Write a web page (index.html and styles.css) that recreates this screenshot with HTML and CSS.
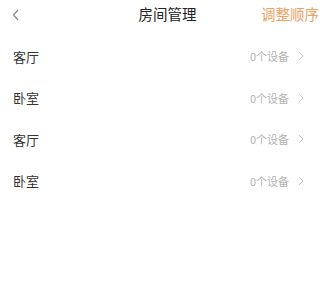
FILE: index.html
```html
<!DOCTYPE html>
<html lang="zh">
<head>
<meta charset="utf-8">
<link rel="stylesheet" href="styles.css">
</head>
<body>
<div class="page">
  <header class="nav">
    <span class="back"><svg width="8" height="12" viewBox="0 0 8 12"><path d="M6 1 L1.5 6 L6 11" fill="none" stroke="#888" stroke-width="1.2"/></svg></span>
    <h1 class="title">房间管理</h1>
    <span class="action">调整顺序</span>
  </header>
  <ul class="list">
    <li class="row"><span class="name">客厅</span><span class="meta">0个设备<svg class="arrow" width="6" height="10" viewBox="0 0 6 10"><path d="M1 1 L5 5 L1 9" fill="none" stroke="#c4c4c4" stroke-width="0.9"/></svg></span></li>
    <li class="row"><span class="name">卧室</span><span class="meta">0个设备<svg class="arrow" width="6" height="10" viewBox="0 0 6 10"><path d="M1 1 L5 5 L1 9" fill="none" stroke="#c4c4c4" stroke-width="0.9"/></svg></span></li>
    <li class="row"><span class="name">客厅</span><span class="meta">0个设备<svg class="arrow" width="6" height="10" viewBox="0 0 6 10"><path d="M1 1 L5 5 L1 9" fill="none" stroke="#c4c4c4" stroke-width="0.9"/></svg></span></li>
    <li class="row"><span class="name">卧室</span><span class="meta">0个设备<svg class="arrow" width="6" height="10" viewBox="0 0 6 10"><path d="M1 1 L5 5 L1 9" fill="none" stroke="#c4c4c4" stroke-width="0.9"/></svg></span></li>
  </ul>
</div>
</body>
</html>
```
FILE: styles.css
```css
html, body {
  margin: 0;
  padding: 0;
  background: #fff;
}
body {
  font-family: "Noto Sans CJK SC", "Noto Sans", sans-serif;
  width: 320px;
  height: 299px;
  overflow: hidden;
}
.nav {
  height: 29px;
  display: grid;
  grid-template-columns: 1fr auto 1fr;
  align-items: center;
  padding: 0 1px 0 12px;
}
.back {
  display: flex;
  align-items: center;
}
.title {
  margin: 0 0 0 4px;
  font-size: 14.5px;
  font-weight: 400;
  color: #222;
  line-height: 1;
}
.action {
  justify-self: end;
  font-size: 14.5px;
  color: #f0a060;
  line-height: 1;
}
.list {
  list-style: none;
  margin: 0;
  padding: 6.5px 0 0;
}
.row {
  height: 41.5px;
  display: flex;
  align-items: center;
  justify-content: space-between;
  padding: 0 16px 0 13px;
}
.name {
  font-size: 13px;
  color: #333;
}
.meta {
  display: flex;
  align-items: center;
  gap: 9px;
  font-size: 11px;
  color: #b3b3b3;
}
.arrow {
  display: block;
}
```
